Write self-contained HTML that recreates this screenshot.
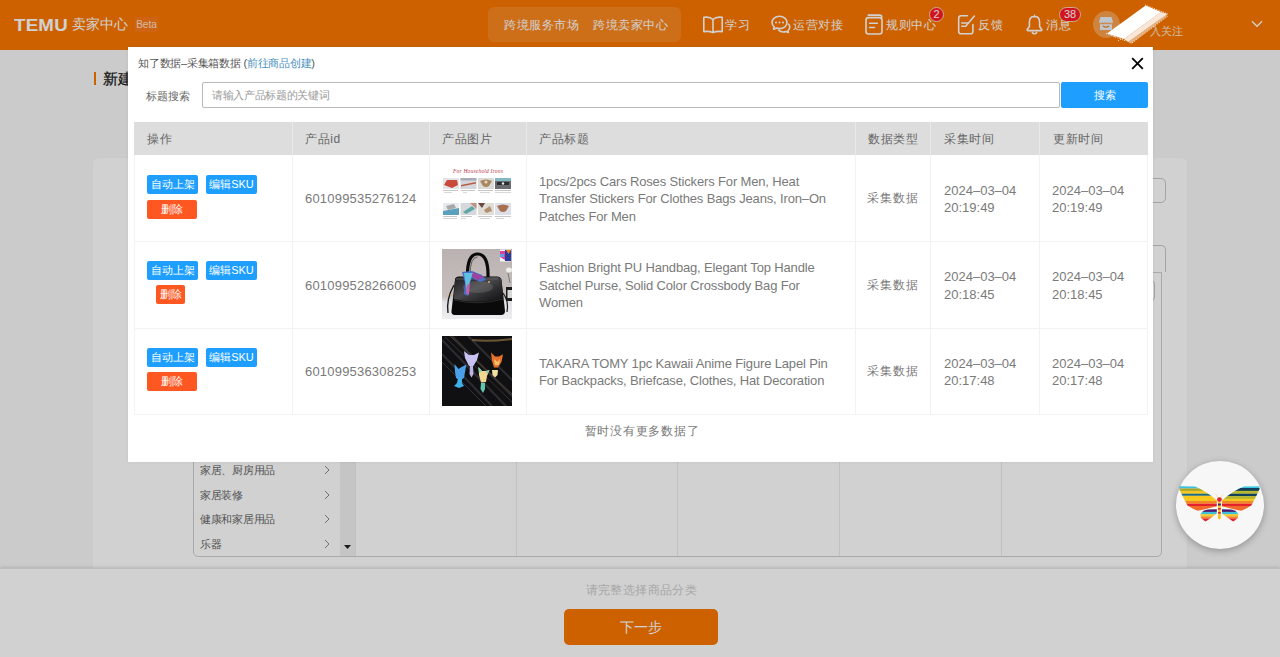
<!DOCTYPE html>
<html><head><meta charset="utf-8">
<style>
*{box-sizing:border-box;margin:0;padding:0}
html,body{width:1280px;height:657px;overflow:hidden}
body{position:relative;background:#f8f8f8;font-family:"Liberation Sans",sans-serif;color:#333}
.abs{position:absolute}
/* header */
#hdr{left:0;top:0;width:1280px;height:50px;background:#fb7701;color:#fff}
#hdr .t{position:absolute;white-space:nowrap;line-height:1}
/* page */
#card{left:93px;top:157px;width:1095px;height:440px;background:#fff;border-radius:6px;border:1px solid #f6f6f6;border-left-color:#fff}
#footer{left:0;top:568px;width:1280px;height:89px;background:#fff;box-shadow:0 -1px 3px rgba(0,0,0,.12);border-top:1px solid #e6e6e6}
#overlay{left:0;top:0;width:1280px;height:657px;background:rgba(0,0,0,.18)}
/* modal */
#modal{left:128px;top:47px;width:1025px;height:415px;background:#fff;box-shadow:0 0 3px rgba(0,0,0,.08)}
.tbl{position:absolute;left:6px;top:75px;width:1014px;border-collapse:collapse}
.cell{position:absolute;color:#666;font-size:13px;line-height:17.5px;white-space:nowrap}
.btn{position:absolute;height:19px;line-height:19px;font-size:11px;color:#fff;text-align:center;border-radius:2px;white-space:nowrap}
.b{background:#1e9fff}
.th{height:33px;line-height:35px;font-size:12px;color:#666;white-space:nowrap;letter-spacing:0.6px}
.td{display:flex;align-items:center;font-size:13px;line-height:17.5px;color:#7a7a7a;white-space:nowrap;padding-top:2px}
.r{background:#ff5722}
</style></head><body>

<div id="hdr" class="abs">
  <div class="t" style="left:14px;top:17px;font-size:17px;font-weight:bold;letter-spacing:0.2px;transform:scaleX(1.1);transform-origin:left">TEMU</div>
  <div class="t" style="left:72px;top:17px;font-size:14px;font-weight:500">卖家中心</div>
  <div class="abs" style="left:135px;top:17px;width:23px;height:15px;background:rgba(255,140,110,.22);border-radius:3px;font-size:10px;line-height:15px;text-align:center;color:#ffe2cc">Beta</div>
  <div class="abs" style="left:488px;top:7px;width:193px;height:35px;background:rgba(255,255,255,.12);border-radius:6px"></div>
  <div class="t" style="left:504px;top:18.5px;font-size:12px;letter-spacing:0.5px">跨境服务市场</div>
  <div class="t" style="left:593px;top:18.5px;font-size:12px;letter-spacing:0.5px">跨境卖家中心</div>
<svg class="abs" style="left:702px;top:15px" width="22" height="19" viewBox="0 0 22 19"><path d="M11 4.5C9 2.5 5 1.8 1.8 2.3V16.6C5 16.1 9 16.6 11 17.6C13 16.6 17 16.1 20.2 16.6V2.3C17 1.8 13 2.5 11 4.5Z M11 4.5V17.4" stroke="#fff" stroke-width="1.6" fill="none" stroke-linecap="round" stroke-linejoin="round"/></svg>
<div class="t" style="left:725px;top:18.5px;font-size:12px;letter-spacing:0.5px">学习</div>
<svg class="abs" style="left:770px;top:15px" width="21" height="19" viewBox="0 0 21 19"><path d="M9.5 1.3C5.3 1.3 2 4 2 7.5C2 9.3 2.8 10.8 4.2 11.9L3.6 14.3L6.6 13.1C7.5 13.4 8.5 13.6 9.5 13.6C13.7 13.6 17 10.9 17 7.5C17 4 13.7 1.3 9.5 1.3Z" stroke="#fff" stroke-width="1.6" fill="none" stroke-linecap="round" stroke-linejoin="round"/><path d="M18.6 9.2C19.4 10 19.8 11 19.8 12.1C19.8 13.5 19.1 14.7 18 15.6L18.4 17.5L16 16.5C15.2 16.8 14.3 17 13.3 17C11.3 17 9.6 16.3 8.6 15.1" stroke="#fff" stroke-width="1.6" fill="none" stroke-linecap="round" stroke-linejoin="round"/><circle cx="6" cy="7.6" r="1" fill="#fff"/><circle cx="9.5" cy="7.6" r="1" fill="#fff"/><circle cx="13" cy="7.6" r="1" fill="#fff"/></svg>
<div class="t" style="left:793px;top:18.5px;font-size:12px;letter-spacing:0.5px">运营对接</div>
<svg class="abs" style="left:865px;top:14px" width="18" height="21" viewBox="0 0 18 21"><rect x="1" y="3.6" width="16" height="16.4" rx="2.5" stroke="#fff" stroke-width="1.6" fill="none" stroke-linecap="round" stroke-linejoin="round"/><path d="M3.2 1.1H14.8C16 1.1 16.8 2 16.8 3.2" stroke="#fff" stroke-width="1.6" fill="none" stroke-linecap="round" stroke-linejoin="round"/><path d="M4.6 9.3H12.3M4.6 13.5H9.5" stroke="#fff" stroke-width="1.6" fill="none" stroke-linecap="round" stroke-linejoin="round"/></svg>
<div class="t" style="left:886px;top:18.5px;font-size:12px;letter-spacing:0.5px">规则中心</div>
<div class="abs" style="left:929px;top:6.5px;width:15px;height:15px;border-radius:8px;background:#ff1a28;border:1px solid #ffd0b0;color:#fff;font-size:11px;line-height:13px;text-align:center">2</div>
<svg class="abs" style="left:957px;top:14px" width="19" height="21" viewBox="0 0 19 21"><path d="M10.5 1.8H4C2.6 1.8 1.7 2.7 1.7 4.1V17.4C1.7 18.8 2.6 19.7 4 19.7H13.6C15 19.7 15.9 18.8 15.9 17.4V10.5" stroke="#fff" stroke-width="1.6" fill="none" stroke-linecap="round" stroke-linejoin="round"/><path d="M8.7 12.3L17.4 2" stroke="#fff" stroke-width="1.6" fill="none" stroke-linecap="round" stroke-linejoin="round"/><path d="M4.8 9H10.7M4.8 12.3H7.5" stroke="#fff" stroke-width="1.6" fill="none" stroke-linecap="round" stroke-linejoin="round"/></svg>
<div class="t" style="left:978px;top:18.5px;font-size:12px;letter-spacing:0.5px">反馈</div>
<svg class="abs" style="left:1025px;top:14px" width="19" height="21" viewBox="0 0 19 21"><path d="M9.5 2.4C6.2 2.4 4.4 5 4.4 8.2V12.6L2.2 15.5C1.9 16 2.2 16.6 2.8 16.6H16.2C16.8 16.6 17.1 16 16.8 15.5L14.6 12.6V8.2C14.6 5 12.8 2.4 9.5 2.4Z" stroke="#fff" stroke-width="1.6" fill="none" stroke-linecap="round" stroke-linejoin="round"/><path d="M9.5 1.3V2.4M7.3 18.3C7.8 19.3 8.6 19.8 9.5 19.8C10.4 19.8 11.2 19.3 11.7 18.3" stroke="#fff" stroke-width="1.6" fill="none" stroke-linecap="round" stroke-linejoin="round"/></svg>
<div class="t" style="left:1046px;top:18.5px;font-size:12px;letter-spacing:0.5px">消息</div>
<div class="abs" style="left:1059px;top:6.5px;width:22px;height:15px;border-radius:8px;background:#ff1a28;border:1px solid #ffd0b0;color:#fff;font-size:11px;line-height:13px;text-align:center">38</div>
<div class="abs" style="left:1092.5px;top:10.5px;width:27px;height:27px;border-radius:50%;background:rgba(255,255,255,.3)"></div>
<svg class="abs" style="left:1098px;top:16px" width="16" height="16" viewBox="0 0 16 16"><path d="M2.5 1H13.5L15 6H1Z" fill="#e8f1fb"/><path d="M1 6Q3 8 5 6Q6.5 8 8 6Q9.5 8 11 6Q13 8 15 6" stroke="#e8f1fb" stroke-width="1" fill="none"/><path d="M2 8.2V14H14V8.2" fill="#e8f1fb"/><path d="M5 10Q8 12.5 11 10" stroke="#fb7701" stroke-width="1.2" fill="none"/></svg>
<div class="t" style="left:1150px;top:26px;font-size:11px;color:#ffe6cc">入关注</div>
<svg class="abs" style="left:1249px;top:19px" width="16" height="10" viewBox="0 0 16 10"><path d="M3 2.3L8 7.3L13 2.3" stroke="#fff" stroke-width="1.3" fill="none"/></svg>
</div>

<div class="abs" style="left:94px;top:72px;width:2px;height:13px;background:#fb7701"></div>
<div class="abs" style="left:103px;top:70px;font-size:15px;font-weight:500;color:#1a1a1a;line-height:17px;-webkit-text-stroke:0.25px #1a1a1a">新建商品</div>

<div id="card" class="abs"></div>
<div class="abs" style="left:300px;top:178px;width:866px;height:25px;border:1px solid #c8c8c8;border-radius:5px"></div>
<div class="abs" style="left:193px;top:245px;width:973px;height:27px;border:1px solid #c8c8c8;border-bottom:none;border-radius:5px 5px 0 0"></div>
<div class="abs" style="left:193px;top:272px;width:969px;height:285px;border:1px solid #cfcfcf;border-radius:0 0 5px 5px;background:#fff;overflow:hidden">
  <div class="abs" style="left:146px;top:0;width:15px;height:283px;background:#f1f1f1"></div>
  <svg class="abs" style="left:150px;top:272px" width="7" height="4"><path d="M0 0H7L3.5 4Z" fill="#222"/></svg>
  <div class="abs" style="left:161px;top:0;width:1px;height:283px;background:#ececec"></div>
  <div class="abs" style="left:322px;top:0;width:1px;height:283px;background:#ececec"></div>
  <div class="abs" style="left:483px;top:0;width:1px;height:283px;background:#ececec"></div>
  <div class="abs" style="left:645px;top:0;width:1px;height:283px;background:#ececec"></div>
  <div class="abs" style="left:807px;top:0;width:1px;height:283px;background:#ececec"></div>
  <div class="abs" style="left:6px;top:-5.7px;font-size:11px;line-height:14px;color:#666;white-space:nowrap;letter-spacing:-0.3px">服装、鞋靴和珠宝饰品</div>
  <svg class="abs" style="left:130px;top:-3.7px" width="6" height="10"><path d="M1 1L5 5L1 9" stroke="#888" stroke-width="1" fill="none"/></svg>
  <div class="abs" style="left:6px;top:18.8px;font-size:11px;line-height:14px;color:#666;white-space:nowrap;letter-spacing:-0.3px">美容个护</div>
  <svg class="abs" style="left:130px;top:20.8px" width="6" height="10"><path d="M1 1L5 5L1 9" stroke="#888" stroke-width="1" fill="none"/></svg>
  <div class="abs" style="left:6px;top:43.3px;font-size:11px;line-height:14px;color:#666;white-space:nowrap;letter-spacing:-0.3px">电子</div>
  <svg class="abs" style="left:130px;top:45.3px" width="6" height="10"><path d="M1 1L5 5L1 9" stroke="#888" stroke-width="1" fill="none"/></svg>
  <div class="abs" style="left:6px;top:67.8px;font-size:11px;line-height:14px;color:#666;white-space:nowrap;letter-spacing:-0.3px">母婴</div>
  <svg class="abs" style="left:130px;top:69.8px" width="6" height="10"><path d="M1 1L5 5L1 9" stroke="#888" stroke-width="1" fill="none"/></svg>
  <div class="abs" style="left:6px;top:92.3px;font-size:11px;line-height:14px;color:#666;white-space:nowrap;letter-spacing:-0.3px">运动与户外</div>
  <svg class="abs" style="left:130px;top:94.3px" width="6" height="10"><path d="M1 1L5 5L1 9" stroke="#888" stroke-width="1" fill="none"/></svg>
  <div class="abs" style="left:6px;top:116.8px;font-size:11px;line-height:14px;color:#666;white-space:nowrap;letter-spacing:-0.3px">办公用品</div>
  <svg class="abs" style="left:130px;top:118.8px" width="6" height="10"><path d="M1 1L5 5L1 9" stroke="#888" stroke-width="1" fill="none"/></svg>
  <div class="abs" style="left:6px;top:141.3px;font-size:11px;line-height:14px;color:#666;white-space:nowrap;letter-spacing:-0.3px">宠牧用品</div>
  <svg class="abs" style="left:130px;top:143.3px" width="6" height="10"><path d="M1 1L5 5L1 9" stroke="#888" stroke-width="1" fill="none"/></svg>
  <div class="abs" style="left:6px;top:165.8px;font-size:11px;line-height:14px;color:#666;white-space:nowrap;letter-spacing:-0.3px">汽车用品</div>
  <svg class="abs" style="left:130px;top:167.8px" width="6" height="10"><path d="M1 1L5 5L1 9" stroke="#888" stroke-width="1" fill="none"/></svg>
  <div class="abs" style="left:6px;top:190.3px;font-size:11px;line-height:14px;color:#666;white-space:nowrap;letter-spacing:-0.3px">家居、厨房用品</div>
  <svg class="abs" style="left:130px;top:192.3px" width="6" height="10"><path d="M1 1L5 5L1 9" stroke="#888" stroke-width="1" fill="none"/></svg>
  <div class="abs" style="left:6px;top:214.8px;font-size:11px;line-height:14px;color:#666;white-space:nowrap;letter-spacing:-0.3px">家居装修</div>
  <svg class="abs" style="left:130px;top:216.8px" width="6" height="10"><path d="M1 1L5 5L1 9" stroke="#888" stroke-width="1" fill="none"/></svg>
  <div class="abs" style="left:6px;top:239.3px;font-size:11px;line-height:14px;color:#666;white-space:nowrap;letter-spacing:-0.3px">健康和家居用品</div>
  <svg class="abs" style="left:130px;top:241.3px" width="6" height="10"><path d="M1 1L5 5L1 9" stroke="#888" stroke-width="1" fill="none"/></svg>
  <div class="abs" style="left:6px;top:263.8px;font-size:11px;line-height:14px;color:#666;white-space:nowrap;letter-spacing:-0.3px">乐器</div>
  <svg class="abs" style="left:130px;top:265.8px" width="6" height="10"><path d="M1 1L5 5L1 9" stroke="#888" stroke-width="1" fill="none"/></svg>
</div>
<div class="abs" style="left:1000px;top:280px;width:155px;height:21px;border:1px solid #c8c8c8;border-radius:4px;background:#fff"></div>
<div id="footer" class="abs">
  <div class="abs" style="left:0;width:1280px;top:14px;text-align:center;font-size:12px;color:#ccc;line-height:14px;letter-spacing:0.4px;padding-left:3px">请完整选择商品分类</div>
  <div class="abs" style="left:564px;top:40px;width:154px;height:36px;background:#fb7701;border-radius:5px;color:#fff;font-size:14px;line-height:36px;text-align:center">下一步</div>
</div>

<div id="overlay" class="abs"></div>
<svg class="abs" style="left:1104px;top:4px" width="70" height="42" viewBox="0 0 70 42"><path d="M3 29.6L41.6 1.5L57 8L20 35Z" fill="#fff"/><path d="M20 35L57 8L63.5 10L24 38Z" fill="#fff" opacity="0.85"/><path d="M24 38L63.5 10L62 13L27 39.5Z" fill="#fff" opacity="0.5"/><path d="M41 1L64 10M2 29.5L22 37M10 33L50 6M28 39L64 12M14 37L55 9" stroke="#fff" stroke-width="0.8" stroke-dasharray="1.2 1.2" fill="none"/></svg>


<div id="modal" class="abs">
  <div class="abs" style="left:10px;top:10px;font-size:11px;color:#555;line-height:13px;white-space:nowrap;letter-spacing:-0.25px">知了数据–采集箱数据 (<span style="color:#4a90c0">前往商品创建</span>)</div>
  <div class="abs" style="left:1003px;top:9px;width:13px;height:13px">
    <svg width="13" height="13" viewBox="0 0 13 13"><path d="M1.2 1.2L11.8 11.8M11.8 1.2L1.2 11.8" stroke="#000" stroke-width="1.8"/></svg>
  </div>
  <div class="abs" style="left:18px;top:43px;font-size:11px;color:#666;line-height:13px">标题搜索</div>
  <div class="abs" style="left:74px;top:35px;width:858px;height:26px;border:1px solid #b8b8b8;border-radius:2px;font-size:11px;color:#999;line-height:24px;padding-left:9px;letter-spacing:-0.35px">请输入产品标题的关键词</div>
  <div class="abs" style="left:933px;top:35px;width:87px;height:26px;background:#1e9fff;border-radius:2px;color:#fff;font-size:11px;line-height:26px;text-align:center">搜索</div>
<div class="abs" style="left:6px;top:75px;width:1014px;height:33px;background:#dddddd"></div>
<div class="abs" style="left:6px;top:108px;width:1014px;height:260px;border:1px solid #f2f2f2;border-top:none"></div>
<div class="abs" style="left:6px;top:194px;width:1014px;height:1px;background:#f2f2f2"></div>
<div class="abs" style="left:6px;top:281px;width:1014px;height:1px;background:#f2f2f2"></div>
<div class="abs" style="left:164px;top:75px;width:1px;height:33px;background:#e9e9e9"></div>
<div class="abs" style="left:164px;top:108px;width:1px;height:259px;background:#f2f2f2"></div>
<div class="abs" style="left:301px;top:75px;width:1px;height:33px;background:#e9e9e9"></div>
<div class="abs" style="left:301px;top:108px;width:1px;height:259px;background:#f2f2f2"></div>
<div class="abs" style="left:398px;top:75px;width:1px;height:33px;background:#e9e9e9"></div>
<div class="abs" style="left:398px;top:108px;width:1px;height:259px;background:#f2f2f2"></div>
<div class="abs" style="left:727px;top:75px;width:1px;height:33px;background:#e9e9e9"></div>
<div class="abs" style="left:727px;top:108px;width:1px;height:259px;background:#f2f2f2"></div>
<div class="abs" style="left:802px;top:75px;width:1px;height:33px;background:#e9e9e9"></div>
<div class="abs" style="left:802px;top:108px;width:1px;height:259px;background:#f2f2f2"></div>
<div class="abs" style="left:911px;top:75px;width:1px;height:33px;background:#e9e9e9"></div>
<div class="abs" style="left:911px;top:108px;width:1px;height:259px;background:#f2f2f2"></div>
<div class="abs th" style="left:19px;top:75px">操作</div>
<div class="abs th" style="left:177px;top:75px">产品id</div>
<div class="abs th" style="left:314px;top:75px">产品图片</div>
<div class="abs th" style="left:411px;top:75px">产品标题</div>
<div class="abs th" style="left:740px;top:75px">数据类型</div>
<div class="abs th" style="left:816px;top:75px">采集时间</div>
<div class="abs th" style="left:925px;top:75px">更新时间</div>
<div class="abs td" style="left:177px;top:108px;height:86px;letter-spacing:0.2px">601099535276124</div>
<div class="abs td" style="left:411px;top:108px;height:86px;letter-spacing:-0.15px">1pcs/2pcs Cars Roses Stickers For Men, Heat<br>Transfer Stickers For Clothes Bags Jeans, Iron–On<br>Patches For Men</div>
<div class="abs td" style="left:739px;top:108px;height:86px;font-size:12px;letter-spacing:1px">采集数据</div>
<div class="abs td" style="left:816px;top:108px;height:86px">2024–03–04<br>20:19:49</div>
<div class="abs td" style="left:924px;top:108px;height:86px">2024–03–04<br>20:19:49</div>
<div class="btn b" style="left:19px;top:128px;width:51px">自动上架</div>
<div class="btn b" style="left:78px;top:128px;width:51px">编辑SKU</div>
<div class="btn r" style="left:19px;top:153px;width:50px">删除</div>
<div class="abs" style="left:314px;top:116px;width:70px;height:70px"><svg width="70" height="70" viewBox="0 0 70 70">
<rect width="70" height="70" fill="#fff"/>
<text x="36" y="9.5" font-family="Liberation Serif" font-style="italic" font-size="5.5" fill="#b83a48" text-anchor="middle" letter-spacing="0.2">For Household Irons</text>
<rect x="1" y="15" width="16" height="11" fill="#e4e4e8"/><path d="M2 22L5 17H15L16 22L10 25Z" fill="#c8483a"/>
<rect x="18.5" y="15" width="16" height="11" fill="#d4d6dc"/><path d="M19 22L34 19V20.5L19 23.5Z" fill="#b85a40"/><rect x="18.5" y="15" width="16" height="2.5" fill="#a8acb8"/>
<rect x="36" y="15" width="16" height="11" fill="#dcdad6"/><path d="M38 18Q44 15 50 18L47 23Q44 25 41 23Z" fill="#a88860"/><circle cx="44" cy="19" r="1.5" fill="#e8d8c0"/>
<rect x="53" y="15" width="16" height="11" fill="#686c70"/><rect x="53" y="15" width="16" height="3" fill="#80b8c4"/><rect x="55" y="19" width="12" height="3" fill="#2a2c30"/><circle cx="61" cy="20.5" r="1.2" fill="#eee"/>
<rect x="1" y="27" width="15" height="1" fill="#c8c8c8"/><rect x="2" y="29" width="8" height="1" fill="#d8d8d8"/>
<rect x="19" y="27" width="14" height="1" fill="#c8c8c8"/><rect x="21" y="29" width="4" height="1" fill="#d8d8d8"/>
<rect x="36" y="27" width="15" height="1" fill="#c8c8c8"/><rect x="38" y="29" width="10" height="1" fill="#d8d8d8"/>
<rect x="53" y="27" width="16" height="1" fill="#c8c8c8"/><rect x="53" y="29" width="16" height="1" fill="#d8d8d8"/>
<rect x="1" y="40" width="16" height="12" fill="#e6eaee"/><path d="M1 48L17 45V52H1Z" fill="#58a0bc"/><path d="M4 43L12 41L14 45L6 47Z" fill="#a8a8a8"/>
<rect x="18.5" y="40" width="16" height="12" fill="#d6d8dc"/><path d="M21 49L30 43L33 46L24 51Z" fill="#60a8a8"/><path d="M28 40L34.5 40V46Z" fill="#c09080"/>
<rect x="36" y="40" width="16" height="12" fill="#e0dcd6"/><path d="M36 40H43L40 45Z" fill="#6a4a40"/><path d="M42 47L48 43L50 48L44 50Z" fill="#b09070"/>
<rect x="53" y="40" width="16" height="12" fill="#dde0e8"/><path d="M55 43Q61 40 67 43L64 48Q61 50 58 48Z" fill="#a87050"/>
<rect x="1" y="53" width="14" height="1" fill="#c8c8c8"/><rect x="1" y="55" width="14" height="1" fill="#d8d8d8"/>
<rect x="19" y="53" width="11" height="1" fill="#c8c8c8"/><rect x="19" y="55" width="5" height="1" fill="#d8d8d8"/>
<rect x="36" y="53" width="14" height="1" fill="#c8c8c8"/><rect x="38" y="55" width="10" height="1" fill="#d8d8d8"/>
<rect x="53" y="53" width="16" height="1" fill="#c8c8c8"/><rect x="54" y="55" width="8" height="1" fill="#d8d8d8"/>
</svg></div>
<div class="abs td" style="left:177px;top:194px;height:87px;letter-spacing:0.2px">601099528266009</div>
<div class="abs td" style="left:411px;top:194px;height:87px;letter-spacing:-0.15px">Fashion Bright PU Handbag, Elegant Top Handle<br>Satchel Purse, Solid Color Crossbody Bag For<br>Women</div>
<div class="abs td" style="left:739px;top:194px;height:87px;font-size:12px;letter-spacing:1px">采集数据</div>
<div class="abs td" style="left:816px;top:194px;height:87px">2024–03–04<br>20:18:45</div>
<div class="abs td" style="left:924px;top:194px;height:87px">2024–03–04<br>20:18:45</div>
<div class="btn b" style="left:19px;top:214px;width:51px">自动上架</div>
<div class="btn b" style="left:78px;top:214px;width:51px">编辑SKU</div>
<div class="btn r" style="left:28px;top:238px;width:29px">删除</div>
<div class="abs" style="left:314px;top:202px;width:70px;height:70px"><svg width="70" height="70" viewBox="0 0 70 70">
<defs><linearGradient id="g2" x1="0" y1="0" x2="0" y2="1"><stop offset="0" stop-color="#bab2b0"/><stop offset="0.68" stop-color="#c6bfbd"/><stop offset="0.76" stop-color="#e2e2e6"/><stop offset="1" stop-color="#eeeef0"/></linearGradient>
<linearGradient id="fl" x1="0" y1="0" x2="1" y2="1"><stop offset="0" stop-color="#1c1c1e"/><stop offset="0.45" stop-color="#48484c"/><stop offset="0.7" stop-color="#2a2a2c"/><stop offset="1" stop-color="#111113"/></linearGradient></defs>
<rect width="70" height="70" fill="url(#g2)"/>
<path d="M25.5 28Q25 5 35.5 5Q46.5 5 46 28" stroke="#0a0a0a" stroke-width="3.2" fill="none"/>
<path d="M28 27Q28 8 35.5 8" stroke="#444" stroke-width="0.8" fill="none"/>
<path d="M13 31Q13 27.5 17 27.5H55Q59 27.5 59.5 31L63 62Q63 66 59 66H13Q9 66 9.5 62Z" fill="#0a0a0a"/>
<path d="M13 31Q13 28 17 28H55Q59 28 59.5 31L61 49Q36 56 11.6 50Z" fill="url(#fl)"/><ellipse cx="36" cy="38" rx="15" ry="6" fill="#888" opacity="0.3"/><path d="M12 51Q36 57 61 50" stroke="#333" stroke-width="0.8" fill="none"/>
<path d="M14 30H56" stroke="#666" stroke-width="0.8"/>
<path d="M12 36Q4 50 6 64" stroke="#1a1a1a" stroke-width="1.4" fill="none"/><path d="M61 44Q67 52 65 63" stroke="#1a1a1a" stroke-width="1.2" fill="none"/>
<circle cx="9" cy="46" r="1" fill="#c8a860"/>
<path d="M20 23L30 22L40 26L44 31L38 33L30 29L27 36L26 47L22 45L23 34Z" fill="#4a70c8"/>
<path d="M22 24L31 24L28 32L25 44Z" fill="#60c0e0"/>
<path d="M31 23L42 28L36 31L30 28Z" fill="#a040a0"/>
<path d="M25 36L28 34L27 46L24 44Z" fill="#c060b0"/>
<circle cx="47" cy="33" r="1" fill="#d0b070"/>
<rect x="58" y="0.5" width="11" height="12" fill="#f4f4f6"/><path d="M58 2H63V11L58 8Z" fill="#e040a0"/><path d="M63 1H69V12H63Z" fill="#283c9c"/><path d="M64 1H69L66.5 5Z" fill="#f08020"/><rect x="58" y="5" width="4" height="3" fill="#60a0e0"/>
<ellipse cx="67" cy="21" rx="3" ry="2.5" fill="#f0f0ea"/><path d="M66 24L68 34" stroke="#666" stroke-width="0.8"/>
<path d="M64 38H70V52H64Z" fill="#1a1a1a"/><path d="M65.5 41H70V49H65.5Z" fill="#d8d8d8"/>
</svg></div>
<div class="abs td" style="left:177px;top:281px;height:86px;letter-spacing:0.2px">601099536308253</div>
<div class="abs td" style="left:411px;top:281px;height:86px;letter-spacing:-0.15px">TAKARA TOMY 1pc Kawaii Anime Figure Lapel Pin<br>For Backpacks, Briefcase, Clothes, Hat Decoration</div>
<div class="abs td" style="left:739px;top:281px;height:86px;font-size:12px;letter-spacing:1px">采集数据</div>
<div class="abs td" style="left:816px;top:281px;height:86px">2024–03–04<br>20:17:48</div>
<div class="abs td" style="left:924px;top:281px;height:86px">2024–03–04<br>20:17:48</div>
<div class="btn b" style="left:19px;top:301px;width:51px">自动上架</div>
<div class="btn b" style="left:78px;top:301px;width:51px">编辑SKU</div>
<div class="btn r" style="left:19px;top:325px;width:50px">删除</div>
<div class="abs" style="left:314px;top:289px;width:70px;height:70px"><svg width="70" height="70" viewBox="0 0 70 70">
<rect width="70" height="70" fill="#101012"/>
<path d="M0 18L50 70M0 4L64 70M10 0L70 60M26 0L70 44" stroke="#2c2c30" stroke-width="2.2"/>
<path d="M3 1L70 66M0 26L44 70" stroke="#3c3c40" stroke-width="0.8"/>
<path d="M8 0L70 58" stroke="#4a3e2a" stroke-width="1"/>
<path d="M30 4Q46 6 70 3" stroke="#6a5634" stroke-width="2" fill="none"/>
<path d="M12.5 28L16.5 33L19.5 31L24.5 28.4L23 36L22 42Q18 45 14 42L13 36Z" fill="#4aa0e8"/>
<path d="M16 42L20 42L20 47L22 50L17 52L12 50L15 47Z" fill="#40b0e8"/>
<path d="M22 15L27 19L32 19L37 16.5L35 24L31 30.5L27 30L23 22Z" fill="#c8c2f2"/>
<path d="M28 30L31 30L31.5 38L29.5 41.5L27.5 38Z" fill="#bcb4e4"/>
<path d="M36.5 31L40 35L44 35L47.5 34L45 40L44 46L39 46.5L37 39Z" fill="#f0d890"/>
<path d="M36.5 31L40 35L37 37Z M47.5 34L44 35L45 38Z" fill="#78d0b8"/>
<path d="M39 47L43 47L43 53L41 57L38.5 53Z" fill="#60c8b0"/>
<path d="M49 16.5L53 20.5L57 20.5L61 18.3L59.5 26L56 31.5L52 31.5L50 25Z" fill="#e8722a"/>
<path d="M52 23L55.5 26L58 23L57 29L53 29Z" fill="#f6c070"/>
<path d="M50 34L56 34L55.5 39L53 41.5L50.5 39Z" fill="#f2e0a0"/>
</svg></div>
<div class="abs" style="left:0;top:377px;width:1025px;text-align:center;font-size:12px;color:#777;line-height:14px;letter-spacing:0.75px;padding-left:3px">暂时没有更多数据了</div>
</div>
<div class="abs" style="left:1176px;top:460.5px;width:88px;height:88px;border-radius:50%;background:#f7f7f7;box-shadow:0 2px 7px rgba(0,0,0,.28)"></div>
<svg class="abs" style="left:1176px;top:460px" width="88" height="88" viewBox="1176 460 88 88">
<defs>
<clipPath id="clu"><path d="M1179.5 486.3L1195 486.6Q1206 491 1216.8 500.5L1216.8 506.2L1203 509.8L1197.5 510.8L1193 508.8L1187.5 505.5L1183.5 498L1179.2 489Z"/></clipPath><clipPath id="cru"><path d="M1259.3 486.3L1243.8 486.6Q1232.8 491 1222 500.5L1222 506.2L1235.8 509.8L1241.3 510.8L1245.8 508.8L1251.3 505.5L1255.3 498L1259.6 489Z"/></clipPath>
<clipPath id="cll"><path d="M1216.8 509.3L1216.8 513.5L1208 520L1205.4 521.6L1201 518L1200.5 514.2Q1203 510 1208 509.6Z"/></clipPath><clipPath id="crl"><path d="M1222 509.3L1222 513.5L1230.8 520L1233.4 521.6L1237.8 518L1238.3 514.2Q1235.8 510 1230.8 509.6Z"/></clipPath>
</defs>
<g clip-path="url(#clu)"><rect x="1178" y="486" width="40" height="2.45" fill="#3cc0dc"/><rect x="1178" y="488.4" width="40" height="2.55" fill="#a9a52a"/><rect x="1178" y="490.9" width="40" height="2.85" fill="#f4c81e"/><rect x="1178" y="493.7" width="40" height="2.15" fill="#176a82"/><rect x="1178" y="495.8" width="40" height="5.25" fill="#f6c81e"/><rect x="1178" y="501" width="40" height="2.85" fill="#f3862a"/><rect x="1178" y="503.8" width="40" height="2.25" fill="#e5202e"/><rect x="1178" y="506" width="40" height="5.05" fill="#f26a2a"/></g>
<g clip-path="url(#cru)"><rect x="1221" y="486" width="40" height="2.05" fill="#3cc8dc"/><rect x="1221" y="488" width="40" height="2.95" fill="#123f5a"/><rect x="1221" y="490.9" width="40" height="2.85" fill="#b8b82a"/><rect x="1221" y="493.7" width="40" height="2.45" fill="#123f5a"/><rect x="1221" y="496.1" width="40" height="2.85" fill="#b5b52a"/><rect x="1221" y="498.9" width="40" height="2.15" fill="#f6c81e"/><rect x="1221" y="501" width="40" height="2.85" fill="#f3862a"/><rect x="1221" y="503.8" width="40" height="2.25" fill="#e5202e"/><rect x="1221" y="506" width="40" height="5.05" fill="#f26a2a"/></g>
<g clip-path="url(#cll)"><rect x="1199" y="509" width="19" height="2.95" fill="#4a1a6a"/><rect x="1199" y="511.9" width="19" height="2.45" fill="#3cc0dc"/><rect x="1199" y="514.3" width="19" height="2.15" fill="#f6c81e"/><rect x="1199" y="516.4" width="19" height="2.15" fill="#f3862a"/><rect x="1199" y="518.5" width="19" height="4.05" fill="#e5202e"/></g>
<g clip-path="url(#crl)"><rect x="1221" y="509" width="19" height="2.95" fill="#4a1a6a"/><rect x="1221" y="511.9" width="19" height="2.45" fill="#3cc0dc"/><rect x="1221" y="514.3" width="19" height="2.15" fill="#f6c81e"/><rect x="1221" y="516.4" width="19" height="2.15" fill="#f3862a"/><rect x="1221" y="518.5" width="19" height="4.05" fill="#e5202e"/></g>
<path d="M1217.6 497L1215.6 494M1221.2 497L1223.2 494" stroke="#f0d890" stroke-width="0.7"/>
<rect x="1218" y="501.5" width="2.8" height="18" rx="1.4" fill="#f6c81e"/>
<rect x="1218" y="503.5" width="2.8" height="2" fill="#4a1a6a"/><rect x="1218" y="508" width="2.8" height="1.6" fill="#e5202e"/><rect x="1218" y="512" width="2.8" height="1.6" fill="#e5202e"/>
<circle cx="1219.4" cy="499.6" r="2.4" fill="#e5202e"/>
</svg>

</body></html>
